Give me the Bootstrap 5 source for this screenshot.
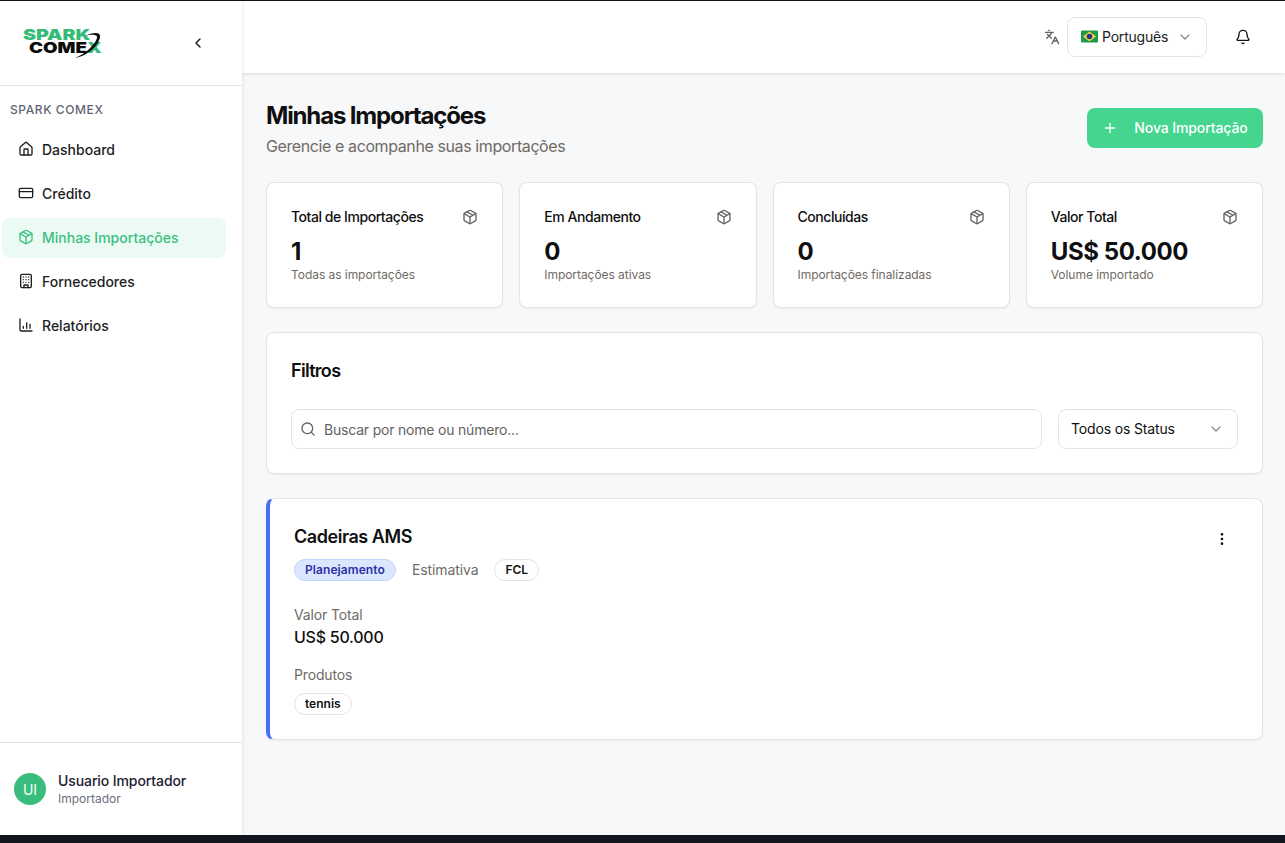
<!DOCTYPE html>
<html lang="pt-BR">
<head>
  <meta charset="UTF-8">
  <meta name="viewport" content="width=device-width, initial-scale=1.0">
  <title>Minhas Importações</title>
  <link href="https://cdn.jsdelivr.net/npm/bootstrap@5.3.2/dist/css/bootstrap.min.css" rel="stylesheet">
  <style>
    html, body { height: 100%; }
    body { background: #13151f; font-family: Inter, "Liberation Sans", sans-serif; color: #0f0f10; overflow: hidden; }
    .app-shell { height: 834px; margin-top: 1px; background: #f7f8fa; }
    .side-bar { width: 242px; flex: none; background: #fff; box-shadow: 0 0 4px rgba(0,0,0,.12); position: relative; z-index: 2; }
    .side-top { height: 85px; border-bottom: 1px solid #e3e4e6; padding: 0 36px 0 23px; }
    .logo-box { width: 80px; height: 34px; position: relative; margin-top: -1px; }
    .logo-line { position: absolute; font-weight: 900; font-size: 15px; line-height: 13px; transform-origin: left top; white-space: nowrap; }
    .logo-a { left: 0; top: 2px; color: #34bb78; transform: scaleX(1.3); }
    .logo-b { left: 6px; top: 15px; color: #0c0c0c; transform: scaleX(1.25); }
    .logo-end { color: #34bb78; }
    .logo-x { position: absolute; left: 0; top: 0; }
    .side-label { font-size: 12px; font-weight: 500; letter-spacing: .6px; color: #5f6473; padding: 16px 0 0 10px; line-height: 15px; height: 44px; }
    .side-link { height: 40px; margin: 0 16px 4px 2px; padding: 0 0 2px 16px; gap: 8px; font-size: 14px; font-weight: 450; color: #1d1e22; border-radius: 8px; text-decoration: none; }
    .side-link.is-on { background: #ebfaf3; color: #3cc082; }
    .side-foot { height: 93px; border-top: 1px solid #e3e4e6; padding: 0 14px; gap: 12px; }
    .user-dot { width: 32px; height: 32px; border-radius: 50%; background: #39bd7c; color: #f2fff8; font-size: 14px; }
    .user-name { font-size: 14px; font-weight: 450; line-height: 20px; color: #1d2030; letter-spacing: -.1px; }
    .user-role { font-size: 12px; line-height: 16px; color: #6b7080; }
    .top-bar { height: 72px; background: #fff; box-shadow: 0 1px 3px rgba(0,0,0,.12); padding-right: 34px; }
    .lang-pick { width: 140px; height: 40px; border: 1px solid #e3e4e6; border-radius: 8px; padding: 0 13px; font-size: 14px; color: #1d1e22; margin: 0 28px 0 7px; letter-spacing: -.2px; }
    .lang-text { padding-bottom: 2px; }
    .page-wrap { padding: 27px 22px 0 24px; }
    .page-title { font-size: 24px; font-weight: 650; line-height: 32px; letter-spacing: -1.150px; margin: 0; }
    .page-sub { font-size: 16px; line-height: 24px; color: #6f6b66; margin: 2px 0 0; letter-spacing: -.4px; }
    .new-btn { width: 176px; height: 40px; background: #45d58f; border: 0; border-radius: 8px; color: #fff; font-size: 14px; font-weight: 450; gap: 16px; margin-top: 8px; letter-spacing: -.1px; padding-bottom: 2px; }
    .stat-grid { display: grid; grid-template-columns: repeat(4, 1fr); gap: 16px; margin-top: 24px; }
    .panel-box { background: #fff; border: 1px solid #e4e4e6; border-radius: 8px; box-shadow: 0 1px 2px rgba(0,0,0,.05); }
    .stat-box { height: 126px; padding: 24px 24px 0; }
    .stat-name { font-size: 14px; font-weight: 450; line-height: 20px; letter-spacing: -.45px; }
    .stat-num { font-size: 24px; font-weight: 700; line-height: 32px; margin-top: 9px; letter-spacing: -.4px; }
    .stat-note { font-size: 12px; line-height: 16px; color: #6f6b66; margin-top: -1px; letter-spacing: -.05px; }
    .filter-box { height: 142px; margin-top: 24px; padding: 24px; }
    .filter-title { font-size: 18px; font-weight: 600; line-height: 28px; letter-spacing: -.7px; margin: 0 0 24px; }
    .search-box { height: 40px; border: 1px solid #e3e4e6; border-radius: 8px; padding-left: 8px; gap: 8px; font-size: 14px; color: #66625e; letter-spacing: -.2px; }
    .status-pick { width: 180px; height: 40px; border: 1px solid #e3e4e6; border-radius: 8px; padding: 0 13px 0 12px; font-size: 14px; letter-spacing: -.15px; }
    .status-text { padding-bottom: 2px; }
    .item-box { height: 242px; margin-top: 24px; border-left: 4px solid #4a6ef5; padding: 24px 24px 0 24px; }
    .item-title { font-size: 18px; font-weight: 600; line-height: 28px; letter-spacing: -.45px; margin: 0; }
    .pill-tag { height: 22px; border: 1px solid #e3e4e6; border-radius: 11px; padding: 0 10px; font-size: 12px; font-weight: 600; color: #111; display: inline-flex; align-items: center; }
    .pill-plan { background: #dbe7fe; border-color: #bfd3fb; color: #2a31a6; letter-spacing: .08px; }
    .item-est { font-size: 14px; color: #6f6b66; letter-spacing: -.1px; padding-bottom: 1px; }
    .meta-label { font-size: 14px; line-height: 20px; color: #6f6b66; letter-spacing: -.15px; }
    .meta-value { font-size: 16px; line-height: 24px; font-weight: 450; letter-spacing: -.25px; }
    .first-meta { margin-top: 24px; }
    .second-meta { margin-top: 16px; }
    .product-row { margin-top: 5px; }
    .kebab-icon { margin: 8px 8px 0 0; }
  </style>
</head>
<body>
  <div class="app-shell d-flex">
    <aside class="side-bar d-flex flex-column">
      <div class="side-top d-flex align-items-center justify-content-between">
        <div class="logo-box">
          <span class="logo-line logo-a">SPARK</span>
          <span class="logo-line logo-b">COME<span class="logo-end">X</span></span>
          <svg class="logo-x" width="80" height="34" viewBox="0 0 80 34"><path d="M62 10C70 6 78 6 77 11 76 19 65 30 52 32 62 28 72 19 74 12 75 8 68 8 62 10z" fill="#0c0c0c"/></svg>
        </div>
        <svg width="16" height="16" viewBox="0 0 24 24" fill="none" stroke="#111" stroke-width="2" stroke-linecap="round" stroke-linejoin="round"><path d="m15 18-6-6 6-6"/></svg>
      </div>
      <div class="side-label">SPARK COMEX</div>
      <a class="side-link d-flex align-items-center" href="#">
        <svg width="16" height="16" viewBox="0 0 24 24" fill="none" stroke="currentColor" stroke-width="2" stroke-linecap="round" stroke-linejoin="round"><path d="M15 21v-8a1 1 0 0 0-1-1h-4a1 1 0 0 0-1 1v8"/><path d="M3 10a2 2 0 0 1 .7-1.500l7-6a2 2 0 0 1 2.600 0l7 6a2 2 0 0 1 .7 1.500v9a2 2 0 0 1-2 2H5a2 2 0 0 1-2-2z"/></svg>
        Dashboard</a>
      <a class="side-link d-flex align-items-center" href="#">
        <svg width="16" height="16" viewBox="0 0 24 24" fill="none" stroke="currentColor" stroke-width="2" stroke-linecap="round" stroke-linejoin="round"><rect width="20" height="14" x="2" y="5" rx="2"/><path d="M2 10h20"/></svg>
        Crédito</a>
      <a class="side-link is-on d-flex align-items-center" href="#">
        <svg width="16" height="16" viewBox="0 0 24 24" fill="none" stroke="currentColor" stroke-width="2" stroke-linecap="round" stroke-linejoin="round"><path d="M11 21.700a2 2 0 0 0 2 0l7-4A2 2 0 0 0 21 16V8a2 2 0 0 0-1-1.700l-7-4a2 2 0 0 0-2 0l-7 4A2 2 0 0 0 3 8v8a2 2 0 0 0 1 1.700z"/><path d="M12 22V12"/><path d="m3.300 7 8.700 5 8.700-5"/><path d="m7.500 4.300 9 5.100"/></svg>
        Minhas Importações</a>
      <a class="side-link d-flex align-items-center" href="#">
        <svg width="16" height="16" viewBox="0 0 24 24" fill="none" stroke="currentColor" stroke-width="2" stroke-linecap="round" stroke-linejoin="round"><rect width="16" height="20" x="4" y="2" rx="2"/><path d="M9 22v-4h6v4M8 6h.01M16 6h.01M12 6h.01M12 10h.01M12 14h.01M16 10h.01M16 14h.01M8 10h.01M8 14h.01"/></svg>
        Fornecedores</a>
      <a class="side-link d-flex align-items-center" href="#">
        <svg width="16" height="16" viewBox="0 0 24 24" fill="none" stroke="currentColor" stroke-width="2" stroke-linecap="round" stroke-linejoin="round"><path d="M3 3v16a2 2 0 0 0 2 2h16"/><path d="M8 17v-3M13 17V9M18 17v-6"/></svg>
        Relatórios</a>
      <div class="side-foot d-flex align-items-center mt-auto">
        <div class="user-dot d-flex align-items-center justify-content-center">UI</div>
        <div>
          <div class="user-name">Usuario Importador</div>
          <div class="user-role">Importador</div>
        </div>
      </div>
    </aside>

    <div class="flex-grow-1">
      <header class="top-bar d-flex align-items-center justify-content-end">
        <svg width="16" height="16" viewBox="0 0 24 24" fill="none" stroke="#66625e" stroke-width="2" stroke-linecap="round" stroke-linejoin="round"><path d="m5 8 6 6M4 14l6-6 2-3M2 5h12M7 2h1M22 22l-5-10-5 10M14 18h6"/></svg>
        <div class="lang-pick d-flex align-items-center justify-content-between">
          <span class="lang-text d-flex align-items-center gap-1">
            <svg width="17" height="13" viewBox="0 0 17 13"><rect width="17" height="12" y=".5" rx="1" fill="#1c9a4a"/><path d="M8.500 1.500 15 6.500l-6.500 5L2 6.500z" fill="#f4d23c"/><circle cx="8.500" cy="6.500" r="2.800" fill="#26358f"/></svg>
            Português
          </span>
          <svg width="16" height="16" viewBox="0 0 24 24" fill="none" stroke="#8a8a8a" stroke-width="2" stroke-linecap="round" stroke-linejoin="round"><path d="m6 9 6 6 6-6"/></svg>
        </div>
        <svg width="16" height="16" viewBox="0 0 24 24" fill="none" stroke="#111" stroke-width="2" stroke-linecap="round" stroke-linejoin="round"><path d="M10.300 21a2 2 0 0 0 3.400 0"/><path d="M3.300 15.300A1 1 0 0 0 4 17h16a1 1 0 0 0 .7-1.700C19.400 14 18 12.500 18 8A6 6 0 0 0 6 8c0 4.500-1.400 6-2.700 7.300"/></svg>
      </header>

      <main class="page-wrap">
        <div class="d-flex justify-content-between align-items-start">
          <div>
            <h1 class="page-title">Minhas Importações</h1>
            <p class="page-sub">Gerencie e acompanhe suas importações</p>
          </div>
          <button class="new-btn d-flex align-items-center justify-content-center" type="button">
            <svg width="16" height="16" viewBox="0 0 24 24" fill="none" stroke="currentColor" stroke-width="2" stroke-linecap="round"><path d="M5 12h14M12 5v14"/></svg>
            Nova Importação
          </button>
        </div>

        <div class="stat-grid">
          <div class="panel-box stat-box">
            <div class="d-flex justify-content-between align-items-center"><span class="stat-name">Total de Importações</span><svg width="16" height="16" viewBox="0 0 24 24" fill="none" stroke="#66625e" stroke-width="2" stroke-linecap="round" stroke-linejoin="round"><path d="M11 21.700a2 2 0 0 0 2 0l7-4A2 2 0 0 0 21 16V8a2 2 0 0 0-1-1.700l-7-4a2 2 0 0 0-2 0l-7 4A2 2 0 0 0 3 8v8a2 2 0 0 0 1 1.700z"/><path d="M12 22V12M3.300 7l8.700 5 8.700-5M7.500 4.300l9 5.100"/></svg></div>
            <div class="stat-num">1</div>
            <div class="stat-note">Todas as importações</div>
          </div>
          <div class="panel-box stat-box">
            <div class="d-flex justify-content-between align-items-center"><span class="stat-name">Em Andamento</span><svg width="16" height="16" viewBox="0 0 24 24" fill="none" stroke="#66625e" stroke-width="2" stroke-linecap="round" stroke-linejoin="round"><path d="M11 21.700a2 2 0 0 0 2 0l7-4A2 2 0 0 0 21 16V8a2 2 0 0 0-1-1.700l-7-4a2 2 0 0 0-2 0l-7 4A2 2 0 0 0 3 8v8a2 2 0 0 0 1 1.700z"/><path d="M12 22V12M3.300 7l8.700 5 8.700-5M7.500 4.300l9 5.100"/></svg></div>
            <div class="stat-num">0</div>
            <div class="stat-note">Importações ativas</div>
          </div>
          <div class="panel-box stat-box">
            <div class="d-flex justify-content-between align-items-center"><span class="stat-name">Concluídas</span><svg width="16" height="16" viewBox="0 0 24 24" fill="none" stroke="#66625e" stroke-width="2" stroke-linecap="round" stroke-linejoin="round"><path d="M11 21.700a2 2 0 0 0 2 0l7-4A2 2 0 0 0 21 16V8a2 2 0 0 0-1-1.700l-7-4a2 2 0 0 0-2 0l-7 4A2 2 0 0 0 3 8v8a2 2 0 0 0 1 1.700z"/><path d="M12 22V12M3.300 7l8.700 5 8.700-5M7.500 4.300l9 5.100"/></svg></div>
            <div class="stat-num">0</div>
            <div class="stat-note">Importações finalizadas</div>
          </div>
          <div class="panel-box stat-box">
            <div class="d-flex justify-content-between align-items-center"><span class="stat-name">Valor Total</span><svg width="16" height="16" viewBox="0 0 24 24" fill="none" stroke="#66625e" stroke-width="2" stroke-linecap="round" stroke-linejoin="round"><path d="M11 21.700a2 2 0 0 0 2 0l7-4A2 2 0 0 0 21 16V8a2 2 0 0 0-1-1.700l-7-4a2 2 0 0 0-2 0l-7 4A2 2 0 0 0 3 8v8a2 2 0 0 0 1 1.700z"/><path d="M12 22V12M3.300 7l8.700 5 8.700-5M7.500 4.300l9 5.100"/></svg></div>
            <div class="stat-num">US$ 50.000</div>
            <div class="stat-note">Volume importado</div>
          </div>
        </div>

        <section class="panel-box filter-box">
          <h2 class="filter-title">Filtros</h2>
          <div class="d-flex gap-3">
            <div class="search-box d-flex align-items-center flex-grow-1">
              <svg width="16" height="16" viewBox="0 0 24 24" fill="none" stroke="#66625e" stroke-width="2" stroke-linecap="round" stroke-linejoin="round"><circle cx="11" cy="11" r="8"/><path d="m21 21-4.300-4.300"/></svg>
              Buscar por nome ou número...
            </div>
            <div class="status-pick d-flex align-items-center justify-content-between">
              <span class="status-text">Todos os Status</span>
              <svg width="16" height="16" viewBox="0 0 24 24" fill="none" stroke="#8a8a8a" stroke-width="2" stroke-linecap="round" stroke-linejoin="round"><path d="m6 9 6 6 6-6"/></svg>
            </div>
          </div>
        </section>

        <section class="panel-box item-box">
          <div class="d-flex justify-content-between align-items-start">
            <div>
              <h3 class="item-title">Cadeiras AMS</h3>
              <div class="d-flex align-items-center gap-3 mt-2">
                <span class="pill-tag pill-plan">Planejamento</span>
                <span class="item-est">Estimativa</span>
                <span class="pill-tag">FCL</span>
              </div>
            </div>
            <svg class="kebab-icon" width="16" height="16" viewBox="0 0 24 24" fill="none" stroke="#111" stroke-width="2" stroke-linecap="round"><circle cx="12" cy="5" r="1"/><circle cx="12" cy="12" r="1"/><circle cx="12" cy="19" r="1"/></svg>
          </div>
          <div class="meta-label first-meta">Valor Total</div>
          <div class="meta-value">US$ 50.000</div>
          <div class="meta-label second-meta">Produtos</div>
          <div class="product-row"><span class="pill-tag">tennis</span></div>
        </section>
      </main>
    </div>
  </div>
  <script src="https://cdn.jsdelivr.net/npm/bootstrap@5.3.2/dist/js/bootstrap.bundle.min.js"></script>
</body>
</html>
